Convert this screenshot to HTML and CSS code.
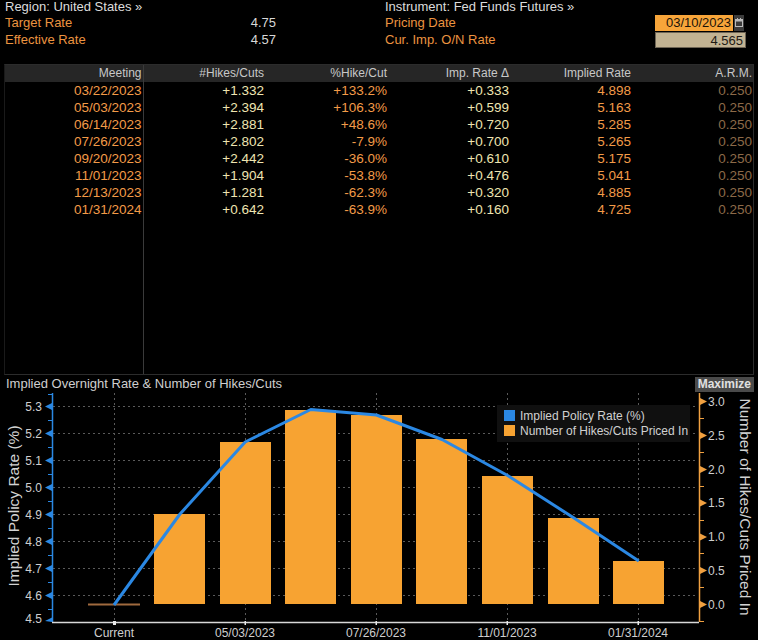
FILE: index.html
```html
<!DOCTYPE html>
<html>
<head>
<meta charset="utf-8">
<link rel="stylesheet" href="styles.css">
</head>
<body>
<div class="top">
  <div class="info info-left">
    <div class="row row-title">Region: United States »</div>
    <div class="row"><span class="lbl">Target Rate</span><span class="val">4.75</span></div>
    <div class="row"><span class="lbl">Effective Rate</span><span class="val">4.57</span></div>
  </div>
  <div class="info info-right">
    <div class="row row-title">Instrument: Fed Funds Futures »</div>
    <div class="row"><span class="lbl">Pricing Date</span><span class="datebox">03/10/2023</span><span class="cal"><svg width="8" height="9" viewBox="0 0 8 9"><rect x="0.5" y="1.5" width="7" height="7" fill="none" stroke="#bbb"/><rect x="0.5" y="1.5" width="7" height="2" fill="#bbb"/><rect x="2" y="0" width="1" height="2" fill="#bbb"/><rect x="5" y="0" width="1" height="2" fill="#bbb"/></svg></span></div>
    <div class="row"><span class="lbl">Cur. Imp. O/N Rate</span><span class="rbox">4.565</span></div>
  </div>
</div>

<div class="tablewrap">
  <table class="grid">
    <colgroup>
      <col class="c1"><col class="c2"><col class="c3"><col class="c4"><col class="c5"><col class="c6">
    </colgroup>
    <thead>
      <tr><th class="first">Meeting</th><th>#Hikes/Cuts</th><th>%Hike/Cut</th><th>Imp. Rate Δ</th><th>Implied Rate</th><th>A.R.M.</th></tr>
    </thead>
    <tbody>
      <tr><td class="first or">03/22/2023</td><td class="cr">+1.332</td><td class="or">+133.2%</td><td class="cr">+0.333</td><td class="or">4.898</td><td class="dim">0.250</td></tr>
      <tr><td class="first or">05/03/2023</td><td class="cr">+2.394</td><td class="or">+106.3%</td><td class="cr">+0.599</td><td class="or">5.163</td><td class="dim">0.250</td></tr>
      <tr><td class="first or">06/14/2023</td><td class="cr">+2.881</td><td class="or">+48.6%</td><td class="cr">+0.720</td><td class="or">5.285</td><td class="dim">0.250</td></tr>
      <tr><td class="first or">07/26/2023</td><td class="cr">+2.802</td><td class="or">-7.9%</td><td class="cr">+0.700</td><td class="or">5.265</td><td class="dim">0.250</td></tr>
      <tr><td class="first or">09/20/2023</td><td class="cr">+2.442</td><td class="or">-36.0%</td><td class="cr">+0.610</td><td class="or">5.175</td><td class="dim">0.250</td></tr>
      <tr><td class="first or">11/01/2023</td><td class="cr">+1.904</td><td class="or">-53.8%</td><td class="cr">+0.476</td><td class="or">5.041</td><td class="dim">0.250</td></tr>
      <tr><td class="first or">12/13/2023</td><td class="cr">+1.281</td><td class="or">-62.3%</td><td class="cr">+0.320</td><td class="or">4.885</td><td class="dim">0.250</td></tr>
      <tr><td class="first or">01/31/2024</td><td class="cr">+0.642</td><td class="or">-63.9%</td><td class="cr">+0.160</td><td class="or">4.725</td><td class="dim">0.250</td></tr>
      <tr class="filler"><td class="first"></td><td></td><td></td><td></td><td></td><td></td></tr>
    </tbody>
  </table>
</div>

<div class="charthead">
  <span class="charttitle">Implied Overnight Rate &amp; Number of Hikes/Cuts</span>
  <span class="maxbtn">Maximize</span>
</div>

<svg class="chart" width="758" height="248" viewBox="0 392 758 248">
  <g class="gridlines" stroke="#5a5a5a" stroke-width="1" stroke-dasharray="2 3">
    <line x1="53" y1="406.5" x2="698" y2="406.5"/>
    <line x1="53" y1="433.5" x2="698" y2="433.5"/>
    <line x1="53" y1="460.5" x2="698" y2="460.5"/>
    <line x1="53" y1="487.5" x2="698" y2="487.5"/>
    <line x1="53" y1="514.5" x2="698" y2="514.5"/>
    <line x1="53" y1="541.5" x2="698" y2="541.5"/>
    <line x1="53" y1="568.5" x2="698" y2="568.5"/>
    <line x1="53" y1="595.5" x2="698" y2="595.5"/>
    <line x1="114.5" y1="393" x2="114.5" y2="621"/>
    <line x1="245.5" y1="393" x2="245.5" y2="621"/>
    <line x1="376.5" y1="393" x2="376.5" y2="621"/>
    <line x1="507.5" y1="393" x2="507.5" y2="621"/>
    <line x1="638.5" y1="393" x2="638.5" y2="621"/>
  </g>

  <line x1="88" y1="604.5" x2="140" y2="604.5" stroke="#a06a3e" stroke-width="2"/>
  <g fill="#f7a332">
    <rect x="154" y="514" width="51" height="90"/>
    <rect x="220" y="442" width="51" height="162"/>
    <rect x="285" y="410" width="51" height="194"/>
    <rect x="351" y="415" width="51" height="189"/>
    <rect x="416" y="439" width="51" height="165"/>
    <rect x="482" y="476" width="51" height="128"/>
    <rect x="548" y="518" width="51" height="86"/>
    <rect x="613" y="561" width="51" height="43"/>
  </g>

  <polyline fill="none" stroke="#2b88e3" stroke-width="3" stroke-linejoin="round"
    points="114,605 179.6,514.5 245.2,442 310.8,409.5 376.4,415 442,439.5 507.6,475.5 573.2,517.5 638.8,561"/>

  <rect x="497" y="405" width="193" height="37" fill="#101010"/>
  <rect x="504" y="410" width="11" height="11" fill="#2b88e3"/>
  <rect x="504" y="425" width="11" height="11" fill="#f7a332"/>
  <text class="lg" x="520" y="420">Implied Policy Rate (%)</text>
  <text class="lg" x="520" y="435">Number of Hikes/Cuts Priced In</text>

  <line x1="52.5" y1="393" x2="52.5" y2="622" stroke="#2b88e3" stroke-width="1.5"/>
  <g fill="#2b88e3">
    <polygon points="45,406.5 52,403 52,410"/>
    <polygon points="45,433.5 52,430 52,437"/>
    <polygon points="45,460.5 52,457 52,464"/>
    <polygon points="45,487.5 52,484 52,491"/>
    <polygon points="45,514.5 52,511 52,518"/>
    <polygon points="45,541.5 52,538 52,545"/>
    <polygon points="45,568.5 52,565 52,572"/>
    <polygon points="45,595.5 52,592 52,599"/>
    <polygon points="45,621 52,617.5 52,622"/>
  </g>
  <g stroke="#2b88e3" stroke-width="1">
    <line x1="48" y1="394.5" x2="52" y2="394.5"/>
    <line x1="48" y1="420.5" x2="52" y2="420.5"/>
    <line x1="48" y1="447.5" x2="52" y2="447.5"/>
    <line x1="48" y1="474.5" x2="52" y2="474.5"/>
    <line x1="48" y1="501.5" x2="52" y2="501.5"/>
    <line x1="48" y1="528.5" x2="52" y2="528.5"/>
    <line x1="48" y1="555.5" x2="52" y2="555.5"/>
    <line x1="48" y1="582.5" x2="52" y2="582.5"/>
    <line x1="48" y1="609.5" x2="52" y2="609.5"/>
  </g>
  <g class="ytl" text-anchor="end">
    <text x="42" y="410.5">5.3</text>
    <text x="42" y="437.5">5.2</text>
    <text x="42" y="464.5">5.1</text>
    <text x="42" y="491.5">5.0</text>
    <text x="42" y="518.5">4.9</text>
    <text x="42" y="545.5">4.8</text>
    <text x="42" y="572.5">4.7</text>
    <text x="42" y="599.5">4.6</text>
    <text x="42" y="623">4.5</text>
  </g>

  <line x1="699.5" y1="393" x2="699.5" y2="622" stroke="#f0a040" stroke-width="1.5"/>
  <g fill="#f0a040">
    <polygon points="707,401.5 700,398 700,405"/>
    <polygon points="707,435.5 700,432 700,439"/>
    <polygon points="707,469.5 700,466 700,473"/>
    <polygon points="707,503 700,499.5 700,506.5"/>
    <polygon points="707,537 700,533.5 700,540.5"/>
    <polygon points="707,570.5 700,567 700,574"/>
    <polygon points="707,604.5 700,601 700,608"/>
  </g>
  <g stroke="#f0a040" stroke-width="1">
    <line x1="700" y1="418.5" x2="704" y2="418.5"/>
    <line x1="700" y1="452.5" x2="704" y2="452.5"/>
    <line x1="700" y1="486.5" x2="704" y2="486.5"/>
    <line x1="700" y1="520.5" x2="704" y2="520.5"/>
    <line x1="700" y1="553.5" x2="704" y2="553.5"/>
    <line x1="700" y1="587.5" x2="704" y2="587.5"/>
    <line x1="700" y1="621.5" x2="704" y2="621.5"/>
  </g>
  <g class="ytl">
    <text x="708" y="405.5">3.0</text>
    <text x="708" y="439.5">2.5</text>
    <text x="708" y="473.5">2.0</text>
    <text x="708" y="507">1.5</text>
    <text x="708" y="541">1.0</text>
    <text x="708" y="574.5">0.5</text>
    <text x="708" y="608.5">0.0</text>
  </g>

  <line x1="52" y1="622.5" x2="699" y2="622.5" stroke="#d8d8d8" stroke-width="1.5"/>
  <g fill="#e8e8e8">
    <rect x="113" y="621" width="3" height="4"/>
    <rect x="244.5" y="621" width="1.5" height="4"/>
    <rect x="375.5" y="621" width="1.5" height="4"/>
    <rect x="506.5" y="621" width="1.5" height="4"/>
    <rect x="637.5" y="621" width="1.5" height="4"/>
  </g>
  <g class="xtl" text-anchor="middle">
    <text x="114" y="636.5">Current</text>
    <text x="245" y="636.5">05/03/2023</text>
    <text x="376" y="636.5">07/26/2023</text>
    <text x="507" y="636.5">11/01/2023</text>
    <text x="638" y="636.5">01/31/2024</text>
  </g>

  <text class="axt" text-anchor="middle" transform="translate(19 506) rotate(-90)">Implied Policy Rate (%)</text>
  <text class="axt" text-anchor="middle" transform="translate(740 507) rotate(90)">Number of Hikes/Cuts Priced In</text>
</svg>
</body>
</html>
```

FILE: styles.css
```css
html, body {
  margin: 0;
  padding: 0;
  background: #000;
}
body {
  width: 758px;
  height: 640px;
  overflow: hidden;
  font-family: "Liberation Sans", Arial, sans-serif;
  font-size: 13px;
  color: #d8d8d8;
}
.top {
  display: flex;
  padding-left: 5px;
  height: 48px;
}
.info-left {
  width: 271px;
}
.info-right {
  margin-left: 109px;
  width: 368px;
}
.row {
  display: flex;
  align-items: center;
  height: 17px;
  line-height: 17px;
}
.row-title {
  height: 14px;
  line-height: 14px;
  color: #dcdcdc;
}
.lbl {
  color: #ec9440;
  flex: 1;
}
.val {
  color: #d8d8d8;
}
.datebox {
  width: 78px;
  height: 16px;
  line-height: 16px;
  background: #f7a53a;
  color: #1a1208;
  text-align: right;
  padding-right: 2px;
  box-sizing: border-box;
  font-size: 13px;
}
.cal {
  width: 10px;
  height: 16px;
  margin-left: 1px;
  margin-right: 9px;
  background: #3c3c3c;
  display: flex;
  align-items: center;
  justify-content: center;
}
.rbox {
  width: 91px;
  height: 16px;
  line-height: 15px;
  margin-top: 1px;
  margin-right: 7px;
  background: #c2b393;
  border: 1px solid #6e6555;
  box-sizing: border-box;
  color: #1e1a14;
  text-align: right;
  padding-right: 2px;
}
.tablewrap {
  margin-top: 16px;
  margin-left: 4px;
  width: 750px;
  height: 311px;
  border: 1px solid #2c2c2c;
  border-left-color: #1a1a1a;
  box-sizing: border-box;
}
.grid {
  border-collapse: collapse;
  table-layout: fixed;
  width: 748px;
}
.c1 { width: 138px; }
.c2 { width: 122px; }
.c3 { width: 123px; }
.c4 { width: 122px; }
.c5 { width: 122px; }
.c6 { width: 121px; }
.grid th {
  background: #262626;
  color: #c8c8c8;
  font-weight: normal;
  font-size: 12px;
  height: 17px;
  line-height: 17px;
  padding: 0 1px 0 0;
  text-align: right;
}
.grid td {
  height: 17px;
  line-height: 17px;
  padding: 0 1px 0 0;
  text-align: right;
  font-size: 13.5px;
}
.grid .first {
  border-right: 1px solid #3a3a3a;
}
.grid tr.filler td {
  height: 156px;
}
.or { color: #f39b48; }
.cr { color: #efe5b2; }
.dim { color: #8c6a48; }

.charthead {
  display: flex;
  justify-content: space-between;
  align-items: center;
  height: 17px;
  padding-left: 6px;
  padding-right: 4px;
}
.charttitle {
  color: #cfcfcf;
  font-size: 13px;
}
.maxbtn {
  background: #4a4a4a;
  color: #e0e0e0;
  font-size: 12px;
  font-weight: bold;
  height: 15px;
  line-height: 15px;
  padding: 0 3px;
  margin-top: 1px;
}
.chart {
  display: block;
}
.chart text {
  font-family: "Liberation Sans", Arial, sans-serif;
}
.lg {
  fill: #d0d0d0;
  font-size: 12px;
}
.ytl text, .xtl text {
  fill: #cfcfcf;
  font-size: 12px;
}
.axt {
  fill: #d2d2d2;
  font-size: 15.5px;
}
```
